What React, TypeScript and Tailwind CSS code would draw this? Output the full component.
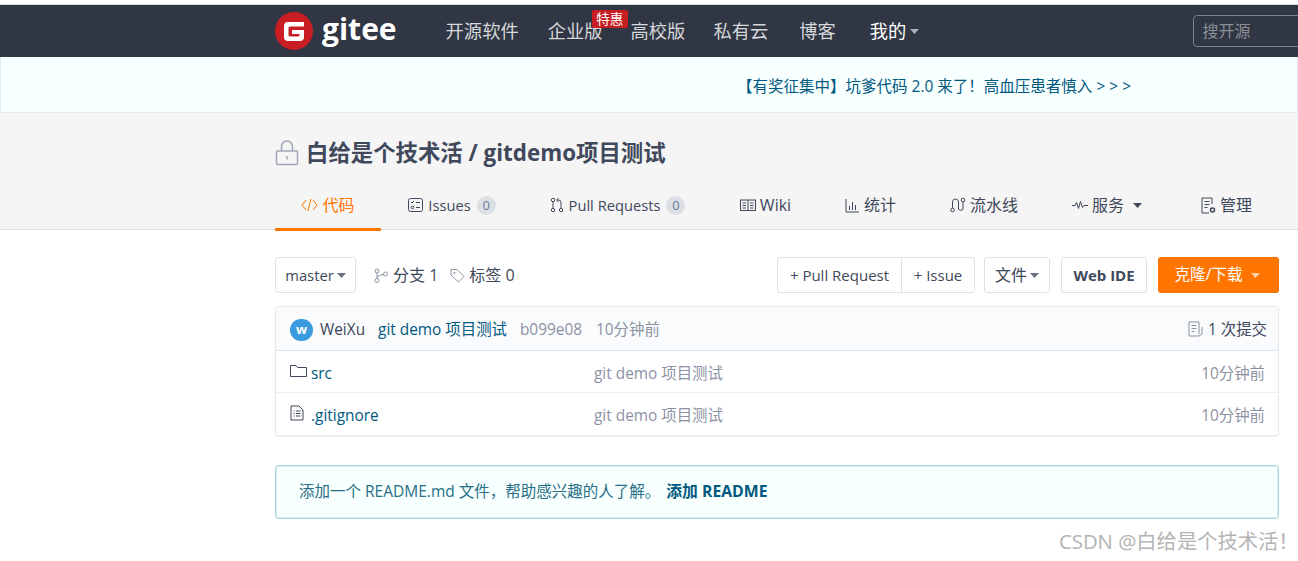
import { ReactNode } from 'react';

const FONT = "font-['Open_Sans','Noto_Sans_CJK_SC',sans-serif]";

const Caret = ({ className = '' }: { className?: string }) => (
  <svg width="9" height="5" viewBox="0 0 9 5" className={`shrink-0 ${className}`}>
    <path d="M0 0h9L4.5 5z" fill="currentColor" />
  </svg>
);

const Stroke = ({ w = 16, h = 16, children, className = '' }: { w?: number; h?: number; children: ReactNode; className?: string }) => (
  <svg width={w} height={h} viewBox={`0 0 ${w} ${h}`} fill="none" stroke="currentColor" strokeWidth="1" className={`shrink-0 ${className}`}>
    {children}
  </svg>
);

const Logo = () => (
  <svg width="38" height="38" viewBox="0 0 38 38" className="shrink-0">
    <circle cx="19" cy="19" r="19" fill="#c71d23" />
    <path d="M9 14a4 4 0 0 1 4-4h16v4.500H15a1.500 1.500 0 0 0-1.500 1.500v7a1.500 1.500 0 0 0 1.500 1.500h8a1.500 1.500 0 0 0 1.500-1.500v-1H17v-4h12v7a4 4 0 0 1-4 4H13a4 4 0 0 1-4-4z" fill="#fff" />
  </svg>
);

const navItems = [
  { label: '开源软件', gap: 'ml-0' },
  { label: '企业版', gap: 'ml-[29px]' },
  { label: '高校版', gap: 'ml-[28px]' },
  { label: '私有云', gap: 'ml-[28px]' },
  { label: '博客', gap: 'ml-[31px]' },
];

const Navbar = () => (
  <div className="h-[52px] bg-[#303643] pl-[275px] flex items-center overflow-hidden whitespace-nowrap">
    <Logo />
    <span className="ml-[9px] w-[75px] text-[30px] font-bold text-white leading-none -mt-[5px] font-['Open_Sans',sans-serif]">gitee</span>
    <div className="ml-[49px] w-[747px] shrink-0 flex items-center text-[#d5d7da] text-[18.3px]">
      {navItems.map((item, i) => (
        <span key={item.label} className={`relative ${item.gap}`}>
          {item.label}
          {i === 1 && (
            <span className="absolute -top-[7px] left-[44px] w-[36px] h-[18px] rounded-[2px] bg-[#c71d23] text-white text-[13.5px] leading-[18px] text-center">
              特惠
            </span>
          )}
        </span>
      ))}
      <span className="ml-[34px] flex items-center text-white">
        我的
        <Caret className="ml-[4px] text-[#aab0b8]" />
      </span>
    </div>
    <div className="shrink-0 w-[140px] h-[32px] border border-[#7c818c] rounded-[4px] pl-[9px] text-[#8b8f98] text-[16px] leading-[30px]">
      搜开源
    </div>
  </div>
);

const Banner = () => (
  <div className="h-[56px] bg-[#f7ffff] border border-[#e3e9ed] border-t-0 pl-[736px] pt-[18px] text-[15.5px] leading-[22px] text-[#005980] whitespace-nowrap">
    【有奖征集中】坑爹代码 2.0 来了！高血压患者慎入 &gt; &gt; &gt;
  </div>
);

const Badge = ({ n }: { n: number }) => (
  <span className="ml-[6px] w-[19px] h-[19px] rounded-full bg-[#dce0e5] text-[#6a7a99] text-[13px] leading-[19px] text-center">{n}</span>
);

const Tab = ({ icon, label, badge, w, active, caret }: { icon: ReactNode; label: string; badge?: number; w: string; active?: boolean; caret?: boolean }) => (
  <div className={`${w} h-[47px] pb-[2px] flex items-center justify-center whitespace-nowrap border-b-[3px] -mb-px ${badge !== undefined ? 'text-[14.7px]' : 'text-[16px]'} ${active ? 'border-[#ff7500] text-[#ff7500]' : 'border-transparent text-[#40485b]'}`}>
    {icon}
    <span className={badge !== undefined ? 'ml-[5px]' : 'ml-[4px]'}>{label}</span>
    {badge !== undefined && <Badge n={badge} />}
    {caret && <Caret className="ml-[9px] text-[#40485b]" />}
  </div>
);

const RepoHeader = () => (
  <div className="h-[117px] bg-[#f5f5f5] border-b border-[#dfdfdf] pl-[275px]">
    <div className="pt-[17px] flex items-center h-[69px] pb-[6px]">
      <Stroke w={24} h={26} className="text-[#a1a6b8]">
        <path d="M6.500 11V6.500a5.500 5.500 0 0 1 11 0V11" strokeWidth="1.500" />
        <rect x="1.500" y="11" width="21" height="13.500" rx="1" strokeWidth="1.500" />
        <path d="M12 16v3.500" strokeWidth="1.500" />
      </Stroke>
      <span className="ml-[7px] text-[22.4px] font-bold text-[#40485b] whitespace-nowrap">白给是个技术活 / gitdemo项目测试</span>
    </div>
    <div className="flex h-[48px] items-end">
      <Tab active w="w-[106px]" label="代码" icon={
        <Stroke w={17} h={14}><path d="M5 2L1 7l4 5M12 2l4 5-4 5M10 1L7 13" /></Stroke>
      } />
      <Tab w="w-[141px]" label="Issues" badge={0} icon={
        <Stroke>
          <rect x="1.500" y="1.500" width="14" height="13" rx="2" />
          <path d="M4 5l1 1 2-2M9 5.500h4M9 10.500h4" />
          <circle cx="5.500" cy="10.500" r="1.300" />
        </Stroke>
      } />
      <Tab w="w-[191px]" label="Pull Requests" badge={0} icon={
        <Stroke w={14} h={16}>
          <circle cx="3" cy="3" r="1.700" /><circle cx="3" cy="13" r="1.700" /><circle cx="11" cy="13" r="1.700" />
          <path d="M3 5v6M11 11V5.500Q11 3 8.500 3H7M8.500 1L6.500 3l2 2" />
        </Stroke>
      } />
      <Tab w="w-[105px]" label="Wiki" icon={
        <Stroke>
          <rect x="0.500" y="3" width="15" height="10.500" />
          <path d="M8 3v10.500M2.500 6h3.500M2.500 8.500h3.500M2.500 11h3.500M10 6h3.500M10 8.500h3.500M10 11h3.500" />
        </Stroke>
      } />
      <Tab w="w-[105px]" label="统计" icon={
        <Stroke w={15} h={15}><path d="M1 1v13h13M4.500 8v4M7.500 4v8M10.500 7v5" /></Stroke>
      } />
      <Tab w="w-[122px]" label="流水线" icon={
        <Stroke>
          <circle cx="2.500" cy="13" r="1.800" /><circle cx="13" cy="3" r="1.800" />
          <path d="M2.500 11V5a3 3 0 0 1 6 0v7a2.500 2.500 0 0 0 4.500 0V5" />
        </Stroke>
      } />
      <Tab w="w-[124px]" label="服务" caret icon={
        <Stroke w={16} h={12}><path d="M0 6.500h3l1.500-3 2 6 2-7 2 6 1.500-2h4" /></Stroke>
      } />
      <Tab w="w-[115px]" label="管理" icon={
        <Stroke w={15} h={17}>
          <path d="M11 7V1H1v15h7" />
          <path d="M3.500 4.500h5M3.500 7.500h5M3.500 10.500h3" />
          <circle cx="11.500" cy="13" r="2" strokeWidth="1.500" />
        </Stroke>
      } />
    </div>
  </div>
);

const Btn = ({ children, className = '' }: { children: ReactNode; className?: string }) => (
  <div className={`h-[36px] border border-[#dce3e8] rounded-[3px] bg-white flex items-center justify-center text-[#40485b] whitespace-nowrap ${className}`}>
    {children}
  </div>
);

const Toolbar = () => (
  <div className="flex items-center h-[36px] mt-[27px] text-[16px] text-[#40485b] whitespace-nowrap">
    <Btn className="w-[81px] text-[14.8px]">
      master<Caret className="ml-[3px] text-[#6a7080]" />
    </Btn>
    <Stroke w={14} h={15} className="ml-[18px] text-[#8c92a4]">
      <circle cx="3" cy="3" r="2" /><circle cx="3" cy="12.500" r="2" /><circle cx="11.500" cy="6" r="2" />
      <path d="M3 5v5.500M9.500 6.500Q5 7 3 9" />
    </Stroke>
    <span className="ml-[5px]">分支 1</span>
    <Stroke w={15} h={15} className="ml-[12px] text-[#8c92a4]">
      <path d="M1 1.500h6l7 7-5.500 5.500-7.500-7z" /><circle cx="4.500" cy="5" r="0.700" />
    </Stroke>
    <span className="ml-[4px]">标签 0</span>
    <div className="ml-auto flex items-center">
      <Btn className="w-[124px] rounded-r-none border-r-0 text-[15px]">+ Pull Request</Btn>
      <Btn className="w-[74px] rounded-l-none text-[15px]">+ Issue</Btn>
      <Btn className="w-[66px] ml-[9px]">
        文件<Caret className="ml-[3px] text-[#6a7080]" />
      </Btn>
      <Btn className="w-[86px] ml-[11px] font-bold text-[15px]">Web IDE</Btn>
      <div className="w-[121px] h-[36px] ml-[11px] pr-[3px] rounded-[3px] bg-[#ff7500] text-white flex items-center justify-center text-[15.6px]">
        克隆/下载<Caret className="ml-[8px] text-[#ffd2a6]" />
      </div>
    </div>
  </div>
);

const FileRow = ({ icon, name, border }: { icon: ReactNode; name: string; border?: boolean }) => (
  <div className={`h-[42px] flex items-center pl-[14px] pr-[13px] pt-[1px] text-[15.4px] whitespace-nowrap ${border ? 'border-b border-[#edf0f3]' : ''}`}>
    <span className="w-[16px] -mt-[3px] flex text-[#40485b]">{icon}</span>
    <span className="ml-[5px] w-[283px] pt-[3px] text-[#005980]">{name}</span>
    <span className="pt-[3px] text-[#8c92a4]">git demo 项目测试</span>
    <span className="ml-auto pt-[3px] text-[#8c92a4]">10分钟前</span>
  </div>
);

const FileTable = () => (
  <div className="mt-[13px] border border-[#e3e9ed] rounded-[3px] shadow-[0_1px_1px_#eef0f2]">
    <div className="h-[44px] pt-[2px] bg-[#fafbfc] border-b border-[#dce3e8] flex items-center pl-[14px] pr-[11px] text-[15.4px] whitespace-nowrap">
      <span className="w-[23px] h-[22px] rounded-full bg-[#3a9ae0] text-white text-[13px] font-bold flex items-center justify-center">w</span>
      <span className="ml-[7px] text-[#40485b]">WeiXu</span>
      <span className="ml-[13px] text-[#005980]">git demo 项目测试</span>
      <span className="ml-[13px] text-[#8c92a4]">b099e08</span>
      <span className="ml-[14px] text-[#8c92a4]">10分钟前</span>
      <div className="ml-auto flex items-center text-[#40485b]">
        <Stroke w={15} h={16} className="text-[#8c92a4]">
          <path d="M11 13V1H1v14h10l3-2V6" /><path d="M3.500 4.500h5M3.500 7.500h5M3.500 10.500h3" />
        </Stroke>
        <span className="ml-[5px]">1 次提交</span>
      </div>
    </div>
    <FileRow border name="src" icon={
      <Stroke w={17} h={14}><path d="M0.500 12.500V1.500h5.500l1.500 2h9v9z" /></Stroke>
    } />
    <FileRow name=".gitignore" icon={
      <Stroke w={14} h={16}>
        <path d="M1 1h8l4 4v10H1z" />
        <path d="M3.500 6h1M6 6h4.500M3.500 8.500h1M6 8.500h4.500M3.500 11h1M6 11h4.500" />
      </Stroke>
    } />
  </div>
);

const ReadmeNotice = () => (
  <div className="mt-[29px] h-[54px] bg-[#f7ffff] border border-[#a9d5de] rounded-[3px] shadow-[0_0_0_1px_#d8eef2_inset] flex items-center pl-[23px] text-[15.5px] text-[#276f86] whitespace-nowrap">
    添加一个 README.md 文件，帮助感兴趣的人了解。
    <span className="ml-[6px] text-[15.8px] font-bold text-[#005980]">添加 README</span>
  </div>
);

const App = () => (
  <div className={`relative w-[1298px] h-[561px] bg-white overflow-hidden ${FONT}`}>
    <div className="h-[5px] bg-white border-b border-[#d8d8d8]" />
    <Navbar />
    <Banner />
    <RepoHeader />
    <div className="ml-[275px] w-[1004px]">
      <Toolbar />
      <FileTable />
      <ReadmeNotice />
    </div>
    <div className="absolute left-[1059px] top-[527px] text-[20.3px] leading-[28px] text-[#b4b4b4] whitespace-nowrap">
      CSDN @白给是个技术活！
    </div>
  </div>
);

export default App;
